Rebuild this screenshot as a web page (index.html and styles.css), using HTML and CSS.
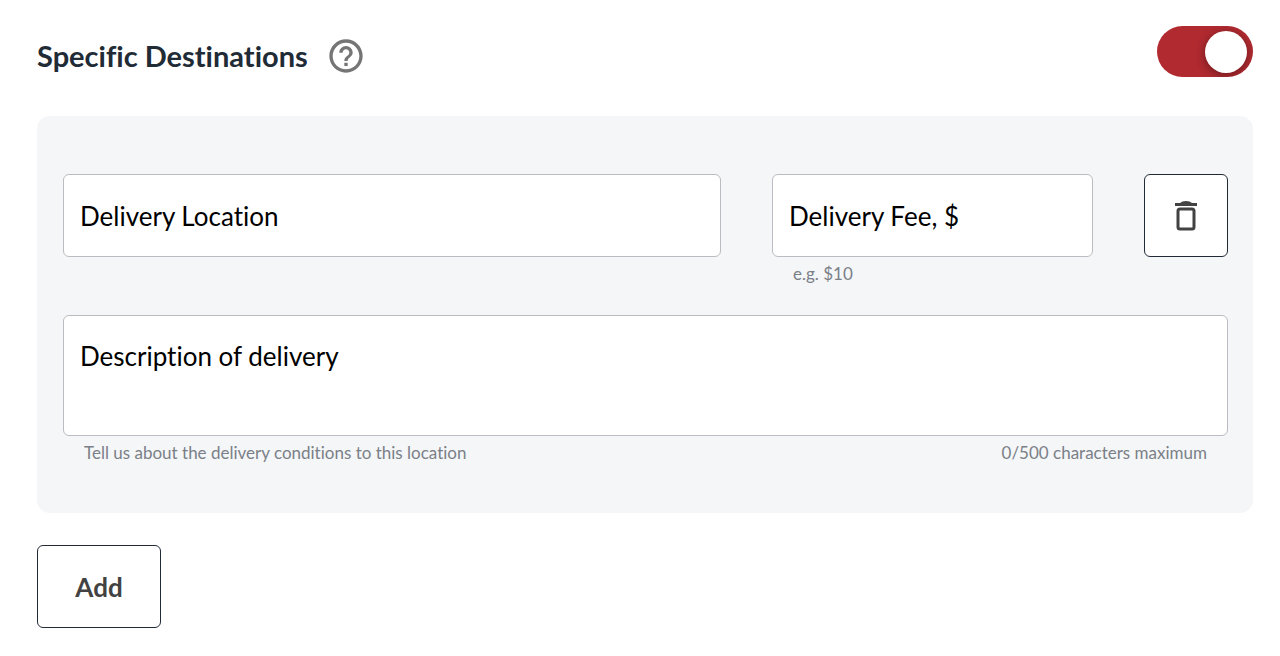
FILE: index.html
```html
<!DOCTYPE html>
<html lang="en">
<head>
<meta charset="UTF-8">
<meta name="viewport" content="width=device-width, initial-scale=1.0">
<title>Specific Destinations</title>
<link rel="stylesheet" href="styles.css">
</head>
<body>

<form class="destinations">
  <div class="header">
    <h2 id="title">Specific Destinations</h2>
    <button type="button" class="help" aria-label="Help">
      <svg width="40" height="40" viewBox="0 0 24 24" fill="#757575">
        <path d="M11 18h2v-2h-2v2zm1-16C6.480 2 2 6.480 2 12s4.480 10 10 10 10-4.480 10-10S17.520 2 12 2zm0 18c-4.410 0-8-3.590-8-8s3.590-8 8-8 8 3.590 8 8-3.590 8-8 8zm0-14c-2.210 0-4 1.790-4 4h2c0-1.100.9-2 2-2s2 .9 2 2c0 2-3 1.750-3 5h2c0-2.250 3-2.500 3-5 0-2.210-1.790-4-4-4z"/>
      </svg>
    </button>
    <input type="checkbox" class="toggle" aria-labelledby="title" checked>
  </div>

  <div class="panel">
    <div class="row">
      <div class="field location">
        <input type="text" class="control" placeholder="Delivery Location" aria-label="Delivery Location">
      </div>
      <div class="field fee">
        <input type="text" class="control" placeholder="Delivery Fee, $" aria-label="Delivery Fee, $" aria-describedby="fee-hint">
        <div class="hints"><span id="fee-hint">e.g. $10</span></div>
      </div>
      <button type="button" class="button delete" aria-label="Delete destination">
        <svg width="22" height="30" viewBox="0 0 22 30">
          <path d="M0 2h5q2-2 6-2t6 2h5v3H0z" fill="#424242"/>
          <rect x="3" y="8" width="16" height="20" rx="2" fill="none" stroke="#424242" stroke-width="3"/>
        </svg>
      </button>
    </div>
    <div class="field">
      <textarea class="control" placeholder="Description of delivery" aria-label="Description of delivery" aria-describedby="description-hint" maxlength="500"></textarea>
      <div class="hints">
        <span id="description-hint">Tell us about the delivery conditions to this location</span>
        <span>0/500 characters maximum</span>
      </div>
    </div>
  </div>

  <button type="button" class="button add">Add</button>
</form>

</body>
</html>
```
FILE: styles.css
```css
* {
  box-sizing: border-box;
}
body {
  margin: 0;
  background-color: #fff;
  font-family: Lato, sans-serif;
  font-variant-ligatures: none;
}
.destinations {
  padding: 26px 27px 28px 37px;
}
.header {
  display: flex;
  align-items: flex-start;
  margin-bottom: 39px;
}
h2 {
  margin: 12px 18px 0 0;
  color: #212b36;
  font-size: 29px;
  line-height: 36px;
}
.help {
  height: 40px;
  margin-top: 10px;
  padding: 0;
  border: 0;
  background: none;
  cursor: pointer;
}
.toggle {
  appearance: none;
  width: 96px;
  height: 51px;
  margin: 0 0 0 auto;
  padding: 5px 6px;
  border-radius: 26px;
  background-color: #9e9e9e;
  overflow: hidden;
  cursor: pointer;
}
.toggle::before {
  content: "";
  display: block;
  width: 42px;
  height: 42px;
  border-radius: 50%;
  background-color: #fff;
  box-shadow: 0 2px 10px rgba(0, 0, 0, 0.4);
}
.toggle:checked {
  background-color: #b02a30;
}
.toggle:checked::before {
  margin-left: auto;
}
.panel {
  padding: 58px 25px 48px 26px;
  border-radius: 13px;
  background-color: #f4f6f8;
}
.row {
  display: flex;
  align-items: flex-start;
  gap: 51px;
  margin-bottom: 29px;
}
.location {
  flex: 658;
}
.fee {
  flex: 321;
}
.control {
  display: block;
  width: 100%;
  height: 83px;
  padding: 0 16px;
  border: 1px solid #b9bcc1;
  border-radius: 6px;
  background-color: #fff;
  color: #000;
  font-family: inherit;
  font-size: 26px;
  line-height: 32px;
  font-variant-ligatures: inherit;
}
textarea.control {
  height: 121px;
  padding-top: 24px;
  resize: none;
}
.control::placeholder {
  color: #000;
  opacity: 1;
}
.hints {
  display: flex;
  justify-content: space-between;
  padding: 5px 21px 0;
  color: #7b8087;
  font-size: 17px;
  line-height: 24px;
}
.button {
  height: 83px;
  padding: 0;
  border: 1px solid #212b36;
  border-radius: 6px;
  background-color: #fff;
  color: #424242;
  font-family: inherit;
  font-size: 26px;
  font-weight: bold;
  cursor: pointer;
}
.delete {
  display: flex;
  align-items: center;
  justify-content: center;
  width: 84px;
}
.add {
  width: 124px;
  margin-top: 32px;
}
```
